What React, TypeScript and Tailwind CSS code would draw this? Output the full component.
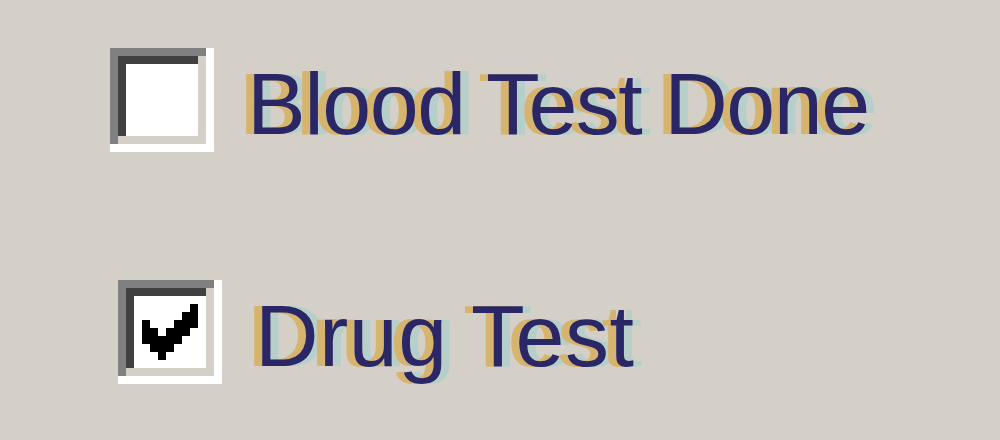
import React from "react";

function Check() {
  const px: [number, number][] = [
    [7, 1],
    [6, 2], [7, 2],
    [1, 3], [5, 3], [6, 3], [7, 3],
    [1, 4], [2, 4], [4, 4], [5, 4], [6, 4],
    [1, 5], [2, 5], [3, 5], [4, 5], [5, 5],
    [2, 6], [3, 6], [4, 6],
    [3, 7],
  ];
  return (
    <svg width="72" height="72" viewBox="0 0 9 9" shapeRendering="crispEdges">
      {px.map(([x, y]) => (
        <rect key={`${x}-${y}`} x={x} y={y} width="1" height="1" fill="#000" />
      ))}
    </svg>
  );
}

function Box({ checked }: { checked: boolean }) {
  return (
    <div className="w-[104px] h-[104px] shrink-0 bg-white pr-2 pb-2">
      <div className="w-[96px] h-[96px] bg-[#808080] pl-2 pt-2">
        <div className="w-[88px] h-[88px] bg-[#d4d0c8] pr-2 pb-2">
          <div className="w-[80px] h-[80px] bg-[#404040] pl-2 pt-2">
            <div className="w-[72px] h-[72px] bg-white">{checked && <Check />}</div>
          </div>
        </div>
      </div>
    </div>
  );
}

export default function App() {
  const text =
    "ml-[33px] mt-[12px] text-[88px] leading-[88px] whitespace-nowrap text-[#2b2766] [text-shadow:-8px_0_#d6b46e,8px_0_#b6cfca]";
  return (
    <div
      className="w-[1000px] h-[440px] bg-[#d4d0c8] overflow-hidden pt-[48px] pl-[110px]"
      style={{ fontFamily: '"Liberation Sans", Arial, sans-serif' }}
    >
      <div className="flex items-start">
        <Box checked={false} />
        <span className={`${text} tracking-[-1.5px]`}>Blood Test Done</span>
      </div>
      <div className="flex items-start mt-[128px] ml-2">
        <Box checked={true} />
        <span className={`${text} tracking-[0.5px]`}>Drug Test</span>
      </div>
    </div>
  );
}
